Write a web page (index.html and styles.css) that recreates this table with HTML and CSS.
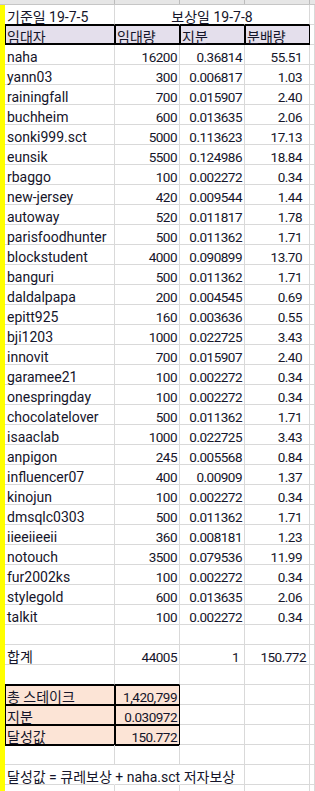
FILE: index.html
```html
<!DOCTYPE html>
<html lang="ko">
<head>
<meta charset="utf-8">
<title>임대 분배</title>
<link rel="stylesheet" href="styles.css">
</head>
<body>
<div class="colhead">
  <div class="ch a"></div><div class="ch"></div><div class="ch"></div><div class="ch"></div><div class="ch last"></div>
</div>
<div class="main">
  <div class="yellow"></div>
  <div class="sheet" id="sheet">
    <div class="c bt">기준일 19-7-5</div><div class="c bt nr"></div><div class="c bt nr ctr">보상일 19-7-8</div><div class="c bt"></div><div class="c"></div>

    <div class="c hd first">임대자</div><div class="c hd">임대량</div><div class="c hd">지분</div><div class="c hd">분배량</div><div class="c"></div>
  </div>
</div>
<script src="app.js"></script>
</body>
</html>
```

FILE: app.js
```javascript
const rows = [
["naha",16200,"0.36814","55.51"],
["yann03",300,"0.006817","1.03"],
["rainingfall",700,"0.015907","2.40"],
["buchheim",600,"0.013635","2.06"],
["sonki999.sct",5000,"0.113623","17.13"],
["eunsik",5500,"0.124986","18.84"],
["rbaggo",100,"0.002272","0.34"],
["new-jersey",420,"0.009544","1.44"],
["autoway",520,"0.011817","1.78"],
["parisfoodhunter",500,"0.011362","1.71"],
["blockstudent",4000,"0.090899","13.70"],
["banguri",500,"0.011362","1.71"],
["daldalpapa",200,"0.004545","0.69"],
["epitt925",160,"0.003636","0.55"],
["bji1203",1000,"0.022725","3.43"],
["innovit",700,"0.015907","2.40"],
["garamee21",100,"0.002272","0.34"],
["onespringday",100,"0.002272","0.34"],
["chocolatelover",500,"0.011362","1.71"],
["isaaclab",1000,"0.022725","3.43"],
["anpigon",245,"0.005568","0.84"],
["influencer07",400,"0.00909","1.37"],
["kinojun",100,"0.002272","0.34"],
["dmsqlc0303",500,"0.011362","1.71"],
["iieeiieeii",360,"0.008181","1.23"],
["notouch",3500,"0.079536","11.99"],
["fur2002ks",100,"0.002272","0.34"],
["stylegold",600,"0.013635","2.06"],
["talkit",100,"0.002272","0.34"]
];
const sheet = document.getElementById("sheet");
function cell(text, cls) {
  const d = document.createElement("div");
  d.className = "c" + (cls ? " " + cls : "");
  d.textContent = text;
  sheet.appendChild(d);
}
function empty(clsA, clsB) {
  cell("", clsA || ""); cell("", clsB || ""); cell(""); cell(""); cell("");
}
rows.forEach(r => {
  cell(r[0]);
  cell(String(r[1]), "n");
  cell(r[2], "n");
  cell(r[3], "n nd");
  cell("");
});
empty();
cell("합계"); cell("44005", "n"); cell("1", "n nc"); cell("150.772", "n nt"); cell("");
empty("bt", "bt");
cell("총 스테이크", "bx first"); cell("1,420,799", "bx n"); cell(""); cell(""); cell("");
cell("지분", "bx first"); cell("0.030972", "bx n"); cell(""); cell(""); cell("");
cell("달성값", "bx first"); cell("150.772", "bx n"); cell(""); cell(""); cell("");
empty("below", "below");
cell("달성값 = 큐레보상 + naha.sct 저자보상", "nr"); cell("", "nr"); cell(""); cell(""); cell("");
empty();
```

FILE: styles.css
```css
* { box-sizing: border-box; }
html, body { margin: 0; padding: 0; background: #fff; }
body {
  width: 315px;
  height: 791px;
  overflow: hidden;
  font-family: "Segoe UI", Roboto, "Noto Sans CJK KR", sans-serif;
  font-size: 14px;
  color: #15152a;
}
.colhead {
  display: grid;
  grid-template-columns: 5px 110px 65px 65px 65px 1fr;
  height: 5px;
  background: #e6e6e6;
  border-bottom: 1px solid #c6c6c6;
}
.colhead::before { content: ""; }
.ch { border-right: 1px solid #bcbcbc; }
.ch.last { border-right: none; }
.main { display: flex; }
.yellow { width: 5px; background: #ffff00; flex: none; }
.sheet {
  flex: 1;
  display: grid;
  grid-template-columns: 110px 65px 65px 65px 1fr;
  grid-auto-rows: 20px;
}
.c {
  height: 20px;
  border-right: 1px solid #d9d9d9;
  border-bottom: 1px solid #d9d9d9;
  padding: 2px 2px 0 2px;
  line-height: 20px;
  white-space: nowrap;
  overflow: visible;
  position: relative;
}
.c.nr { border-right-color: transparent; }
.c.ctr { display: flex; justify-content: center; padding: 2px 0 0 0; }
.c.n {
  text-align: right;
  padding-right: 2px;
  font-size: 13.5px;
  letter-spacing: -0.5px;
}
.c.nd { padding-right: 7px; }
.c.nc { padding-right: 5px; }
.c.nt { padding-right: 3px; }
.c.bt { border-bottom-color: #000; }
.c.hd {
  background: #e4dfec;
  border-right-color: #000;
  border-bottom-color: #000;
  box-shadow: inset 1px 1px 0 #000, inset 0 -1px 0 #000;
}
.c.hd.first { box-shadow: inset 1px 1px 0 #000, inset 0 -1px 0 #000, inset 1px 0 0 #000; }
.c.bx {
  background: #fce4d6;
  border-right-color: #000;
  border-bottom-color: #000;
  box-shadow: inset 1px 1px 0 #000;
}
.c.below { box-shadow: inset 0 1px 0 #000; }
```
